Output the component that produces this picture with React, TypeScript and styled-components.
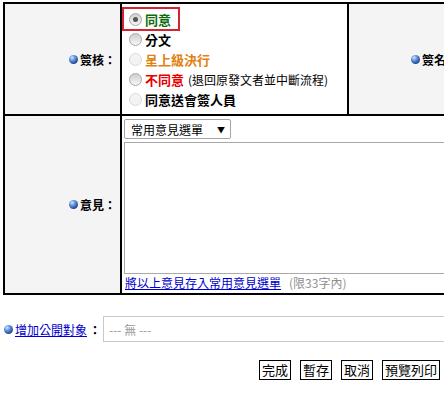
import React from 'react';
import styled, { createGlobalStyle } from 'styled-components';

const Global = createGlobalStyle`
  html, body { margin: 0; padding: 0; background: #fff; overflow: hidden; }
  body {
    font-family: "Noto Sans CJK TC", "Noto Sans", sans-serif;
    font-size: 12px;
    color: #000;
  }
`;

const Page = styled.div`
  width: 444px;
  height: 396px;
  overflow: hidden;
`;

const FormGrid = styled.div`
  margin: 2px 0 0 3px;
  width: 760px;
  display: grid;
  grid-template-columns: 115px 225px 113px 1fr;
  grid-template-rows: 110px 177px;
  gap: 2px;
  padding: 2px;
  background: #000;
`;

const LabelCell = styled.div`
  background: #f4f4f4;
  display: flex;
  align-items: center;
  justify-content: flex-end;
  gap: 2px;
  padding-right: 4px;
  font-weight: bold;
  font-size: 12px;
`;

const BlankCell = styled.div`
  background: #fff;
`;

const Ball = styled.span`
  width: 9px;
  height: 9px;
  border-radius: 50%;
  flex-shrink: 0;
  background: radial-gradient(circle at 35% 30%, #d6e6ff 0%, #6b9be0 30%, #244a96 70%, #10265c 100%);
`;

const RadioCell = styled.div`
  background: #fff;
  display: flex;
  flex-direction: column;
  padding: 5px 0 5px 2px;
`;

const RadioItem = styled.label<{ $marked?: boolean }>`
  align-self: flex-start;
  display: inline-flex;
  align-items: center;
  gap: 3px;
  height: 20px;
  padding: 0 7px 0 5px;
  outline: ${(p) => (p.$marked ? '2px solid #d42230' : 'none')};
`;

const RadioDot = styled.span<{ $checked?: boolean; $disabled?: boolean }>`
  width: 13px;
  height: 13px;
  box-sizing: border-box;
  border-radius: 50%;
  flex-shrink: 0;
  border: 1px solid ${(p) => (p.$disabled ? '#dadada' : '#a8a8a8')};
  background: ${(p) => (p.$disabled ? '#f3f3f3' : 'linear-gradient(#cfcfcf, #f6f6f6)')};
  display: flex;
  align-items: center;
  justify-content: center;
  &::after {
    content: '';
    width: 5px;
    height: 5px;
    border-radius: 50%;
    background: #555;
    display: ${(p) => (p.$checked ? 'block' : 'none')};
  }
`;

const RadioText = styled.span<{ $color: string }>`
  font-weight: bold;
  font-size: 13px;
  color: ${(p) => p.$color};
  white-space: nowrap;
`;

const Note = styled.span`
  font-size: 12px;
  font-weight: normal;
  color: #000;
  margin-left: 1px;
  white-space: nowrap;
`;

const OpinionCell = styled.div`
  grid-column: 2 / -1;
  background: #fff;
  display: flex;
  flex-direction: column;
  padding: 3px 2px 0 2px;
`;

const SelectBox = styled.label`
  align-self: flex-start;
  display: inline-flex;
  align-items: center;
  width: 107px;
  height: 20px;
  box-sizing: border-box;
  border: 1px solid #a5a5a5;
  border-radius: 2px;
  background: #fff;
  padding: 0 5px 0 6px;
`;

const NativeSelect = styled.select`
  appearance: none;
  border: 0;
  background: transparent;
  font: inherit;
  font-size: 12px;
  padding: 0;
  flex: 1;
  min-width: 0;
  outline: none;
  color: #000;
`;

const Arrow = styled.span`
  font-size: 8px;
  color: #000;
`;

const Opinion = styled.textarea`
  margin-top: 3px;
  height: 132px;
  box-sizing: border-box;
  border: 1px solid #a9a9a9;
  resize: none;
  font: inherit;
  outline: none;
`;

const SaveLine = styled.div`
  height: 18px;
  line-height: 18px;
  padding-left: 1px;
  white-space: nowrap;
`;

const Link = styled.a`
  color: #0000cc;
  text-decoration: underline;
  font-size: 12px;
  cursor: pointer;
`;

const Hint = styled.span`
  color: #8f8f8f;
  margin-left: 8px;
`;

const PublicRow = styled.div`
  display: flex;
  align-items: center;
  margin-top: 21px;
  padding-left: 4px;
  height: 26px;
  gap: 2px;
  white-space: nowrap;
`;

const Colon = styled.span`
  font-weight: bold;
`;

const PublicInput = styled.input`
  flex-shrink: 0;
  width: 400px;
  height: 26px;
  box-sizing: border-box;
  border: 1px solid #c8c8c8;
  padding: 0 5px;
  font: inherit;
  font-size: 12px;
  outline: none;
  &::placeholder { color: #9a9a9a; }
`;

const ButtonBar = styled.div`
  display: flex;
  justify-content: flex-end;
  gap: 9px;
  margin-top: 18px;
  padding-right: 4px;
  width: 444px;
  box-sizing: border-box;
`;

const Btn = styled.button`
  height: 20px;
  border: 1px solid #000;
  background: #fff;
  padding: 0 2px;
  font-family: inherit;
  font-size: 13px;
  line-height: 18px;
  color: #000;
  border-radius: 0;
`;

const options = [
  { text: '同意', color: '#0a6c0a', checked: true, marked: true },
  { text: '分文', color: '#000' },
  { text: '呈上級決行', color: '#e0820f', disabled: true },
  { text: '不同意', color: '#e60000', note: '(退回原發文者並中斷流程)' },
  { text: '同意送會簽人員', color: '#000', disabled: true },
];

export default function App() {
  return (
    <Page>
      <Global />
      <FormGrid>
        <LabelCell>
          <Ball />
          簽核：
        </LabelCell>
        <RadioCell>
          {options.map((o) => (
            <RadioItem key={o.text} $marked={o.marked}>
              <RadioDot $checked={o.checked} $disabled={o.disabled} />
              <RadioText $color={o.color}>{o.text}</RadioText>
              {o.note && <Note>{o.note}</Note>}
            </RadioItem>
          ))}
        </RadioCell>
        <LabelCell>
          <Ball />
          簽名：
        </LabelCell>
        <BlankCell />
        <LabelCell>
          <Ball />
          意見：
        </LabelCell>
        <OpinionCell>
          <SelectBox>
            <NativeSelect defaultValue="">
              <option value="">常用意見選單</option>
            </NativeSelect>
            <Arrow>▼</Arrow>
          </SelectBox>
          <Opinion />
          <SaveLine>
            <Link>將以上意見存入常用意見選單</Link>
            <Hint>(限33字內)</Hint>
          </SaveLine>
        </OpinionCell>
      </FormGrid>
      <PublicRow>
        <Ball />
        <Link>增加公開對象</Link>
        <Colon>：</Colon>
        <PublicInput placeholder="--- 無 ---" />
      </PublicRow>
      <ButtonBar>
        <Btn>完成</Btn>
        <Btn>暫存</Btn>
        <Btn>取消</Btn>
        <Btn>預覽列印</Btn>
      </ButtonBar>
    </Page>
  );
}
